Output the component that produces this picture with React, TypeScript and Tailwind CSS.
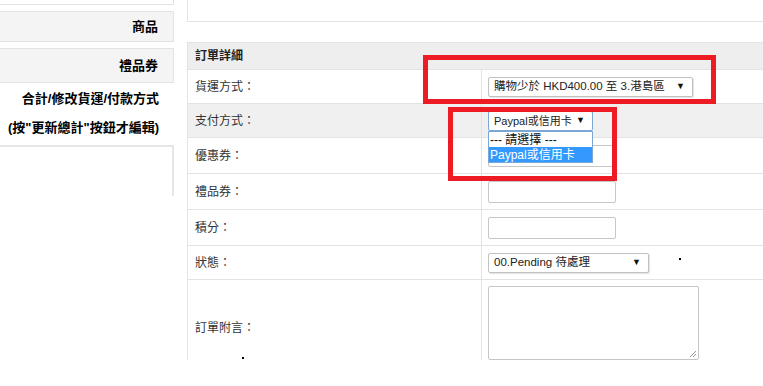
import React from "react";

const font = "font-['Liberation_Sans','Noto_Sans_CJK_TC',sans-serif]";

function Row({ label, h, bg = "bg-white", children, labelClass = "" }: { label: string; h: string; bg?: string; children?: React.ReactNode; labelClass?: string }) {
  return (
    <div className={`flex ${h} ${bg} border-b border-[#e3e3e3]`}>
      <div className={`w-[293px] shrink-0 flex items-center pl-[7px] text-[12px] text-[#333] ${labelClass}`}>{label}</div>
      <div className="flex-1 border-l border-[#e3e3e3] flex items-center pl-[6px]">{children}</div>
    </div>
  );
}

function Sel({ w, text, focus = false, size = "text-[11.5px]" }: { w: string; text: string; focus?: boolean; size?: string }) {
  return (
    <div
      className={`${w} h-[20px] flex items-center justify-between pl-[5px] pr-[7px] ${size} text-[#222] bg-white rounded-[2px] border ${
        focus ? "border-[#7aa7d6]" : "border-[#c2c2c2] shadow-[1px_1px_1px_rgba(0,0,0,0.12)]"
      }`}
    >
      <span className="whitespace-nowrap">{text}</span>
      <span className="text-[9px] text-[#111]">▼</span>
    </div>
  );
}

function Input() {
  return <div className="w-[128px] h-[22px] border border-[#c6c6c6] rounded-[2px] bg-white" />;
}

export default function App() {
  return (
    <div className={`${font} relative w-[763px] h-[386px] overflow-hidden bg-white flex`}>
      {/* Left nav */}
      <div className="w-[174px] shrink-0 flex flex-col">
        <div className="h-[5px] border-b border-r border-[#e3e3e3] bg-white" />
        <div className="mt-[6px] h-[31px] border-y border-r border-[#e3e3e3] bg-[#f4f4f4] flex items-center justify-end pr-[15px] text-[13px] font-bold text-black">
          商品
        </div>
        <div className="mt-[6px] h-[35px] border-y border-r border-[#e3e3e3] bg-[#f4f4f4] flex items-center justify-end pr-[15px] text-[13px] font-bold text-black">
          禮品券
        </div>
        <div className="h-[31px] flex items-center justify-end pr-[15px] text-[13px] font-bold text-black whitespace-nowrap">
          合計/修改貨運/付款方式
        </div>
        <div className="h-[27px] flex items-center justify-end pr-[15px] text-[13px] font-bold text-black whitespace-nowrap">
          (按"更新總計"按鈕才編輯)
        </div>
        <div className="mt-[4px] h-[51px] border-t-2 border-r-2 border-[#e6e6e6]" />
      </div>

      {/* Right panel */}
      <div className="ml-[13px] flex-1 h-[360px] overflow-hidden flex flex-col">
        <div className="h-[22px] shrink-0 border-l border-b border-[#e3e3e3]" />
        <div className="mt-[20px] border-l border-[#e3e3e3] flex flex-col">
          <div className="h-[28px] bg-[#eeeeee] border-y border-[#e3e3e3] flex items-center pl-[7px] text-[12px] font-bold text-[#222]">
            訂單詳細
          </div>
          <Row label="貨運方式：" h="h-[34px]">
            <Sel w="w-[205px]" text="購物少於 HKD400.00 至 3.港島區" />
          </Row>
          <Row label="支付方式：" h="h-[34px]" bg="bg-[#f0f0f0]">
            <div className="self-start mt-[7px]">
              <Sel w="w-[105px]" text="Paypal或信用卡" focus size="text-[11px]" />
            </div>
          </Row>
          <Row label="優惠券：" h="h-[36px]">
            <Input />
          </Row>
          <Row label="禮品券：" h="h-[36px]">
            <Input />
          </Row>
          <Row label="積分：" h="h-[36px]">
            <Input />
          </Row>
          <Row label="狀態：" h="h-[34px]">
            <Sel w="w-[161px]" text="00.Pending 待處理" />
          </Row>
          <div className="flex h-[96px]">
            <div className="w-[293px] shrink-0 flex items-center pl-[7px] text-[12px] text-[#333]">訂單附言：</div>
            <div className="flex-1 border-l border-[#e3e3e3] pl-[6px] pt-[6px]">
              <div className="relative w-[211px] h-[74px] border border-[#c6c6c6] rounded-[2px] bg-white">
                <svg className="absolute right-[1px] bottom-[1px]" width="8" height="8" viewBox="0 0 8 8">
                  <path d="M7 1L1 7M7 4L4 7" stroke="#999" strokeWidth="1" />
                </svg>
              </div>
            </div>
          </div>
        </div>
      </div>

      {/* stray dots */}
      <span className="absolute left-[679px] top-[258px] w-[2px] h-[2px] bg-black" />
      <span className="absolute left-[242px] top-[357px] w-[2px] h-[2px] bg-black" />

      {/* dropdown list */}
      <div className="absolute left-[488px] top-[131px] w-[105px] h-[32px] border border-[#7aa7d6] bg-white text-[12px] flex flex-col">
        <div className="h-[15px] flex items-center pl-[1px] text-[#111]">--- 請選擇 ---</div>
        <div className="h-[15px] flex items-center pl-[1px] bg-[#3399ff] text-white">Paypal或信用卡</div>
      </div>

      {/* red annotation boxes */}
      <div className="absolute left-[423px] top-[55px] w-[293px] h-[49px] border-[5px] border-[#ed1c24]" />
      <div className="absolute left-[448px] top-[107px] w-[169px] h-[74px] border-[5px] border-[#ed1c24]" />
    </div>
  );
}
